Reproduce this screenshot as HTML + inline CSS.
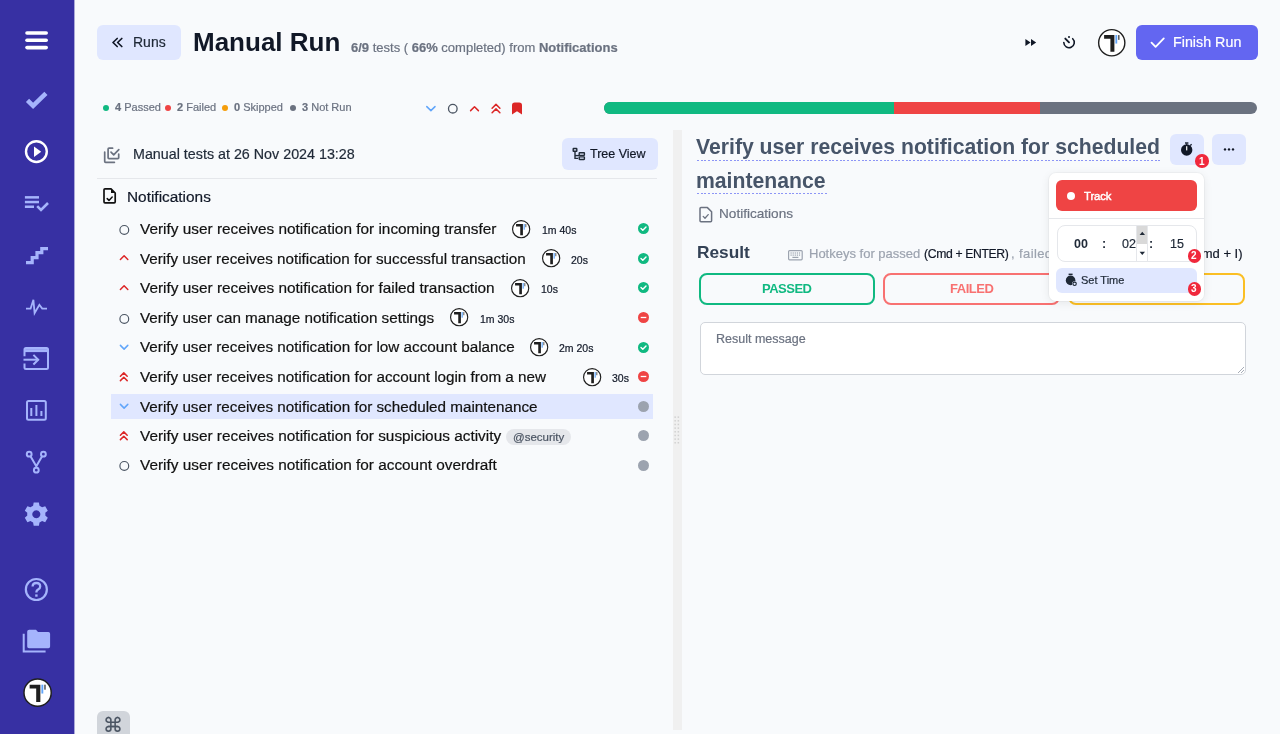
<!DOCTYPE html>
<html><head><meta charset="utf-8">
<style>
*{box-sizing:border-box;margin:0;padding:0}
html,body{width:1280px;height:734px;overflow:hidden;background:#f8fafc;font-family:"Liberation Sans",sans-serif;color:#111827}
.a{position:absolute}
.t{position:absolute;line-height:1;white-space:nowrap;will-change:transform;-webkit-text-stroke:0.2px currentColor}
#sb{left:0;top:0;width:74px;height:734px;background:#3730a3}
#sb svg{position:absolute}
.t[style*="font-weight:700"]{-webkit-text-stroke:0}
.btn{position:absolute;border-radius:6px}
</style></head><body>
<!-- sidebar -->
<div id="sb" class="a">
<svg width="74" height="734" viewBox="0 0 74 734" style="left:0;top:0">
 <g stroke="#fff" stroke-width="3.6" stroke-linecap="round" fill="none">
  <line x1="27" y1="33" x2="46.2" y2="33"/><line x1="27" y1="40.3" x2="46.2" y2="40.3"/><line x1="27" y1="47.6" x2="46.2" y2="47.6"/>
 </g>
 <path d="M27.5 100.3 L33.1 105.9 L45.9 93.3" stroke="#a5b4fc" stroke-width="4.5" fill="none"/>
 <circle cx="36.4" cy="151.6" r="10.4" stroke="#fff" stroke-width="2.4" fill="none"/>
 <path d="M34 146.6 L41.2 151.8 L34 157 Z" fill="#fff"/>
 <g fill="#a5b4fc">
  <rect x="24.9" y="196.1" width="14.1" height="2.5"/><rect x="24.9" y="200.8" width="14.1" height="2.5"/><rect x="24.9" y="205.5" width="9.1" height="2.5"/>
 </g>
 <path d="M37.2 206.2 L41 210 L48 203" stroke="#a5b4fc" stroke-width="2.6" fill="none"/>
 <path d="M26 262.6 H32.2 V257.6 H37 V252.6 H41.8 V248.6 H48" stroke="#a5b4fc" stroke-width="3.2" fill="none"/>
 <path d="M26 308.6 H30.6 L33.4 299.8 L34.6 313 L39.4 304.8 L42.2 308.6 H47" stroke="#a5b4fc" stroke-width="1.8" fill="none" stroke-linejoin="miter"/>
 <g stroke="#a5b4fc" stroke-width="2" fill="none">
  <path d="M24.5 356.2 V349.5 Q24.5 348 26 348 H46.5 Q48 348 48 349.5 V367.5 Q48 369 46.5 369 H26 Q24.5 369 24.5 367.5 V363.4"/>
  <line x1="24.5" y1="350.6" x2="48" y2="350.6" stroke-width="3"/>
  <line x1="23.5" y1="359.7" x2="38.4" y2="359.7"/>
  <path d="M33.4 354.9 L38.2 359.7 L33.4 364.5"/>
  <rect x="27" y="401" width="18.8" height="18.8" rx="1.5"/>
 </g>
 <g fill="#a5b4fc">
  <rect x="30.3" y="408" width="2" height="8"/><rect x="35.4" y="405" width="2" height="11"/><rect x="40.4" y="411" width="2" height="5"/>
 </g>
 <g stroke="#a5b4fc" stroke-width="2" fill="none">
  <circle cx="29.2" cy="454.2" r="2.4"/><circle cx="43.4" cy="454.2" r="2.4"/><circle cx="36.3" cy="470.2" r="2.4"/>
  <path d="M30.5 456.3 L36.3 466.2 L42.1 456.3 M36.3 466 V467.8"/>
 </g>
 <g transform="translate(36.3 514.2)">
  <path fill="#a5b4fc" fill-rule="evenodd" d="M-2.6,-11.6 H2.6 L3.2,-8.4 Q4.6,-7.8 5.8,-6.9 L8.9,-8 L11.5,-3.5 L9,-1.4 Q9.2,0 9,1.4 L11.5,3.5 L8.9,8 L5.8,6.9 Q4.6,7.8 3.2,8.4 L2.6,11.6 H-2.6 L-3.2,8.4 Q-4.6,7.8 -5.8,6.9 L-8.9,8 L-11.5,3.5 L-9,1.4 Q-9.2,0 -9,-1.4 L-11.5,-3.5 L-8.9,-8 L-5.8,-6.9 Q-4.6,-7.8 -3.2,-8.4 Z M0,-4 A4,4 0 1,0 0.01,-4 Z"/>
 </g>
 <circle cx="36.35" cy="589.5" r="10.5" stroke="#a5b4fc" stroke-width="2.2" fill="none"/>
 <path d="M32.6 586.6 Q32.6 583 36.4 583 Q40.2 583 40.2 586.4 Q40.2 588.4 38 589.6 Q36.4 590.4 36.4 592 V592.6" stroke="#a5b4fc" stroke-width="2.3" fill="none"/>
 <rect x="35.2" y="594.4" width="2.4" height="2.3" fill="#a5b4fc"/>
 <path d="M29.2 629.8 H36 L38 632 H48.4 Q50.1 632 50.1 633.8 V646.4 Q50.1 648.2 48.4 648.2 H29 Q27.2 648.2 27.2 646.4 V631.6 Q27.2 629.8 29.2 629.8 Z" fill="#a5b4fc"/>
 <path d="M23.7 633.8 V651.5 H45.6" stroke="#a5b4fc" stroke-width="2" fill="none"/>
 <g transform="translate(23.3 678.4) scale(1.04)"><circle cx="13.75" cy="13.75" r="13.1" fill="#fff" stroke="#1f1f1f" stroke-width="1.4"/><path d="M6.1 6.05 H16.4 V22.75 H12.4 V9.75 H6.1 Z" fill="#1f1f1f"/><rect x="17.4" y="6.05" width="1.8" height="8.5" fill="#60a5fa"/><rect x="20.3" y="6.05" width="1.1" height="4.8" fill="#1f1f1f"/></g>
</svg>
</div>

<div class="a" style="left:74px;top:0;width:1px;height:734px;background:rgba(55,48,163,0.4)"></div>
<!-- header -->
<div class="btn" style="left:97px;top:25px;width:84px;height:35px;background:#e0e7ff"></div>
<div class="t" style="left:133px;top:34.5px;font-size:14px;color:#1f2937">Runs</div>
<div class="t" style="left:192.6px;top:29px;font-size:26px;font-weight:700;color:#111827">Manual Run</div>
<div class="t" style="left:351px;top:41px;font-size:13px;color:#6b7280"><b>6/9</b> tests ( <b>66%</b> completed) from <b>Notifications</b></div>

<div class="btn" style="left:1136px;top:25px;width:121.5px;height:35px;background:#6366f1"></div>
<div class="t" style="left:1173px;top:34.5px;font-size:14.3px;color:#fff">Finish Run</div>

<!-- legend -->
<div class="t" style="left:102px;top:101.7px;font-size:11px;color:#6b7280"></div>

<!-- progress -->
<div class="a" style="left:604px;top:102px;width:653.4px;height:11.5px;border-radius:6px;overflow:hidden;background:#6b7280">
  <div class="a" style="left:0;top:0;width:290.3px;height:100%;background:#10b981"></div>
  <div class="a" style="left:290.3px;top:0;width:145.3px;height:100%;background:#ef4444"></div>
</div>

<!-- left panel header -->
<div class="t" style="left:132.5px;top:146.5px;font-size:14.3px;color:#1f2937">Manual tests at 26 Nov 2024 13:28</div>
<div class="btn" style="left:562px;top:138px;width:96px;height:31.5px;background:#e0e7ff"></div>
<div class="t" style="left:590.3px;top:147.5px;font-size:12.5px;color:#111827">Tree View</div>
<div class="a" style="left:97px;top:178px;width:560px;height:1px;background:#e5e7eb"></div>
<div class="t" style="left:127px;top:189px;font-size:15.4px;color:#111827">Notifications</div>

<svg class="a" style="left:108px;top:34px" width="20" height="17" viewBox="108 34 20 17"><path d="M117.2 38.5 L113 42.5 L117.2 46.5 M121.8 38.5 L117.6 42.5 L121.8 46.5" stroke="#111827" stroke-width="1.7" fill="none" stroke-linecap="round" stroke-linejoin="round"/></svg>
<svg class="a" style="left:1020px;top:30px" width="60" height="25" viewBox="1020 30 60 25">
 <path d="M1025.4 38.9 L1030.6 42.4 L1025.4 45.9 Z M1031 38.9 L1036.2 42.4 L1031 45.9 Z" fill="#111827"/>
 <path d="M1063.8 42.6 A5.25 5.25 0 1 0 1072.7 38.7" stroke="#111827" stroke-width="1.6" fill="none" stroke-linecap="round"/>
 <line x1="1065.3" y1="38.6" x2="1069" y2="42.3" stroke="#111827" stroke-width="1.9" stroke-linecap="round"/>
 <circle cx="1069" cy="36.9" r="1" fill="#111827"/>
</svg>
<svg class="a" style="left:1097.65px;top:28.85px;overflow:visible" width="27.50" height="27.50" viewBox="0 0 27.5 27.5"><circle cx="13.75" cy="13.75" r="13.1" fill="#fff" stroke="#1f1f1f" stroke-width="1.4"/><path d="M6.1 6.05 H16.4 V22.75 H12.4 V9.75 H6.1 Z" fill="#1f1f1f"/><rect x="17.4" y="6.05" width="1.8" height="8.5" fill="#60a5fa"/><rect x="20.3" y="6.05" width="1.1" height="4.8" fill="#1f1f1f"/></svg>
<svg class="a" style="left:1148px;top:35px" width="20" height="15" viewBox="1148 35 20 15"><path d="M1151.5 42.6 L1155.6 46.9 L1163.8 38.4" stroke="#fff" stroke-width="1.8" fill="none" stroke-linecap="round" stroke-linejoin="round"/></svg>
<div class="a" style="left:102.6px;top:104.7px;width:6px;height:6px;border-radius:50%;background:#10b981"></div>
<div class="t" style="left:115px;top:101.69px;font-size:11px;color:#6b7280"><b>4</b> Passed</div>
<div class="a" style="left:165.0px;top:104.7px;width:6px;height:6px;border-radius:50%;background:#ef4444"></div>
<div class="t" style="left:177px;top:101.69px;font-size:11px;color:#6b7280"><b>2</b> Failed</div>
<div class="a" style="left:221.5px;top:104.7px;width:6px;height:6px;border-radius:50%;background:#f59e0b"></div>
<div class="t" style="left:234px;top:101.69px;font-size:11px;color:#6b7280"><b>0</b> Skipped</div>
<div class="a" style="left:290.0px;top:104.7px;width:6px;height:6px;border-radius:50%;background:#6b7280"></div>
<div class="t" style="left:302px;top:101.69px;font-size:11px;color:#6b7280"><b>3</b> Not Run</div>
<svg class="a" style="left:420px;top:98px" width="110" height="20" viewBox="420 98 110 20">
 <path d="M426.8 106.6 L430.9 110.6 L435 106.6" stroke="#60a5fa" stroke-width="1.5" fill="none" stroke-linecap="round" stroke-linejoin="round"/>
 <circle cx="452.8" cy="108.7" r="4.3" stroke="#4b5563" stroke-width="1.3" fill="none"/>
 <path d="M470.6 110.6 L474.5 106.7 L478.4 110.6" stroke="#dc2626" stroke-width="1.5" fill="none" stroke-linecap="round" stroke-linejoin="round"/>
 <path d="M492.1 108.3 L496 104.4 L499.9 108.3 M492.1 112.8 L496 108.9 L499.9 112.8" stroke="#dc2626" stroke-width="1.5" fill="none" stroke-linecap="round" stroke-linejoin="round"/>
 <path d="M512 105.4 Q512 102.6 514.8 102.6 H519.2 Q522 102.6 522 105.4 V114.4 L517 111.2 L512 114.4 Z" fill="#dc2626"/>
</svg>
<svg class="a" style="left:100px;top:144px" width="24" height="22" viewBox="100 144 24 22">
 <path d="M104.7 152 V161.4 Q104.7 162.3 105.6 162.3 H114.4" stroke="#6b7280" stroke-width="1.7" fill="none" stroke-linecap="round"/>
 <path d="M112.6 148.2 H109 Q108.1 148.2 108.1 149.1 V157.8 Q108.1 158.7 109 158.7 H117.8 Q118.7 158.7 118.7 157.8 V154" stroke="#6b7280" stroke-width="1.7" fill="none" stroke-linecap="round"/>
 <path d="M111 152.2 L113.7 154.9 L118.8 149.6" stroke="#6b7280" stroke-width="1.7" fill="none" stroke-linecap="round" stroke-linejoin="round"/>
</svg>
<svg class="a" style="left:570px;top:145px" width="20" height="18" viewBox="570 145 20 18">
 <g stroke="#1f2937" stroke-width="1.4" fill="none">
 <rect x="573.2" y="148.5" width="3.6" height="2.8" rx="0.4"/>
 <path d="M575 151.5 V158.4 H578"/>
 <rect x="579.2" y="152.8" width="5.2" height="2.6" rx="0.4"/>
 <rect x="579.2" y="156.9" width="5.2" height="2.6" rx="0.4"/>
 <path d="M575 155.6 H579"/>
 </g>
</svg>
<svg class="a" style="left:100px;top:185px" width="20" height="22" viewBox="100 185 20 22">
 <path d="M105 188.8 H111 L115.2 193 V201.8 Q115.2 202.8 114.2 202.8 H105 Q104 202.8 104 201.8 V189.8 Q104 188.8 105 188.8 Z" stroke="#111" stroke-width="1.7" fill="none" stroke-linejoin="round"/>
 <path d="M111 188.8 V193 H115.2 Z" fill="#111"/>
 <path d="M107.2 198.6 L109 200.4 L112.2 197" stroke="#111" stroke-width="1.5" fill="none" stroke-linecap="round" stroke-linejoin="round"/>
</svg>
<div class="a" style="left:111.3px;top:394px;width:541.7px;height:25.4px;background:#e0e7ff"></div>
<svg class="a" style="left:118px;top:221.80px" width="14" height="14" viewBox="0 0 14 14"><circle cx="6.3" cy="7.9" r="4.4" stroke="#4b5563" stroke-width="1.15" fill="none"/></svg>
<div class="t" style="left:140.2px;top:221.23px;font-size:15.38px;color:#111">Verify user receives notification for incoming transfer</div>
<svg class="a" style="left:512.25px;top:219.65px;overflow:visible" width="18.30" height="18.30" viewBox="0 0 27.5 27.5"><circle cx="13.75" cy="13.75" r="12.9" fill="#fff" stroke="#1f1f1f" stroke-width="1.75"/><path d="M6.1 6.05 H16.4 V22.75 H12.4 V9.75 H6.1 Z" fill="#1f1f1f"/><rect x="17.4" y="6.05" width="1.8" height="8.5" fill="#60a5fa"/><rect x="20.3" y="6.05" width="1.1" height="4.8" fill="#1f1f1f"/></svg>
<div class="t" style="left:542px;top:225.06px;font-size:10.5px;color:#111827">1m 40s</div>
<svg class="a" style="left:637.7px;top:223.30px" width="11" height="11" viewBox="0 0 11 11"><circle cx="5.5" cy="5.5" r="5.5" fill="#10b981"/><path d="M3 5.6 L4.8 7.3 L8 4" stroke="#fff" stroke-width="1.4" fill="none" stroke-linecap="round" stroke-linejoin="round"/></svg>
<svg class="a" style="left:118px;top:251.37px" width="14" height="14" viewBox="0 0 14 14"><path d="M2.4 8.5 L6.1 4.8 L9.8 8.5" stroke="#dc2626" stroke-width="1.5" fill="none" stroke-linecap="round" stroke-linejoin="round"/></svg>
<div class="t" style="left:140.2px;top:250.90px;font-size:15.22px;color:#111">Verify user receives notification for successful transaction</div>
<svg class="a" style="left:541.95px;top:249.22px;overflow:visible" width="18.30" height="18.30" viewBox="0 0 27.5 27.5"><circle cx="13.75" cy="13.75" r="12.9" fill="#fff" stroke="#1f1f1f" stroke-width="1.75"/><path d="M6.1 6.05 H16.4 V22.75 H12.4 V9.75 H6.1 Z" fill="#1f1f1f"/><rect x="17.4" y="6.05" width="1.8" height="8.5" fill="#60a5fa"/><rect x="20.3" y="6.05" width="1.1" height="4.8" fill="#1f1f1f"/></svg>
<div class="t" style="left:571.3px;top:254.59px;font-size:10.5px;color:#111827">20s</div>
<svg class="a" style="left:637.7px;top:252.87px" width="11" height="11" viewBox="0 0 11 11"><circle cx="5.5" cy="5.5" r="5.5" fill="#10b981"/><path d="M3 5.6 L4.8 7.3 L8 4" stroke="#fff" stroke-width="1.4" fill="none" stroke-linecap="round" stroke-linejoin="round"/></svg>
<svg class="a" style="left:118px;top:280.94px" width="14" height="14" viewBox="0 0 14 14"><path d="M2.4 8.5 L6.1 4.8 L9.8 8.5" stroke="#dc2626" stroke-width="1.5" fill="none" stroke-linecap="round" stroke-linejoin="round"/></svg>
<div class="t" style="left:140.2px;top:280.29px;font-size:15.38px;color:#111">Verify user receives notification for failed transaction</div>
<svg class="a" style="left:511.25px;top:278.79px;overflow:visible" width="18.30" height="18.30" viewBox="0 0 27.5 27.5"><circle cx="13.75" cy="13.75" r="12.9" fill="#fff" stroke="#1f1f1f" stroke-width="1.75"/><path d="M6.1 6.05 H16.4 V22.75 H12.4 V9.75 H6.1 Z" fill="#1f1f1f"/><rect x="17.4" y="6.05" width="1.8" height="8.5" fill="#60a5fa"/><rect x="20.3" y="6.05" width="1.1" height="4.8" fill="#1f1f1f"/></svg>
<div class="t" style="left:541.1px;top:284.12px;font-size:10.5px;color:#111827">10s</div>
<svg class="a" style="left:637.7px;top:282.44px" width="11" height="11" viewBox="0 0 11 11"><circle cx="5.5" cy="5.5" r="5.5" fill="#10b981"/><path d="M3 5.6 L4.8 7.3 L8 4" stroke="#fff" stroke-width="1.4" fill="none" stroke-linecap="round" stroke-linejoin="round"/></svg>
<svg class="a" style="left:118px;top:310.51px" width="14" height="14" viewBox="0 0 14 14"><circle cx="6.3" cy="7.9" r="4.4" stroke="#4b5563" stroke-width="1.15" fill="none"/></svg>
<div class="t" style="left:140.2px;top:309.93px;font-size:15.25px;color:#111">Verify user can manage notification settings</div>
<svg class="a" style="left:449.70px;top:308.36px;overflow:visible" width="18.30" height="18.30" viewBox="0 0 27.5 27.5"><circle cx="13.75" cy="13.75" r="12.9" fill="#fff" stroke="#1f1f1f" stroke-width="1.75"/><path d="M6.1 6.05 H16.4 V22.75 H12.4 V9.75 H6.1 Z" fill="#1f1f1f"/><rect x="17.4" y="6.05" width="1.8" height="8.5" fill="#60a5fa"/><rect x="20.3" y="6.05" width="1.1" height="4.8" fill="#1f1f1f"/></svg>
<div class="t" style="left:479.6px;top:313.65px;font-size:10.5px;color:#111827">1m 30s</div>
<svg class="a" style="left:637.7px;top:312.01px" width="11" height="11" viewBox="0 0 11 11"><circle cx="5.5" cy="5.5" r="5.5" fill="#ef4444"/><rect x="2.7" y="4.85" width="5.6" height="1.3" fill="#fff"/></svg>
<svg class="a" style="left:118px;top:340.08px" width="14" height="14" viewBox="0 0 14 14"><path d="M2.4 5.4 L6.1 9.1 L9.8 5.4" stroke="#60a5fa" stroke-width="1.5" fill="none" stroke-linecap="round" stroke-linejoin="round"/></svg>
<div class="t" style="left:140.2px;top:339.46px;font-size:15.25px;color:#111">Verify user receives notification for low account balance</div>
<svg class="a" style="left:530.00px;top:337.93px;overflow:visible" width="18.30" height="18.30" viewBox="0 0 27.5 27.5"><circle cx="13.75" cy="13.75" r="12.9" fill="#fff" stroke="#1f1f1f" stroke-width="1.75"/><path d="M6.1 6.05 H16.4 V22.75 H12.4 V9.75 H6.1 Z" fill="#1f1f1f"/><rect x="17.4" y="6.05" width="1.8" height="8.5" fill="#60a5fa"/><rect x="20.3" y="6.05" width="1.1" height="4.8" fill="#1f1f1f"/></svg>
<div class="t" style="left:559.3px;top:343.18px;font-size:10.5px;color:#111827">2m 20s</div>
<svg class="a" style="left:637.7px;top:341.58px" width="11" height="11" viewBox="0 0 11 11"><circle cx="5.5" cy="5.5" r="5.5" fill="#10b981"/><path d="M3 5.6 L4.8 7.3 L8 4" stroke="#fff" stroke-width="1.4" fill="none" stroke-linecap="round" stroke-linejoin="round"/></svg>
<svg class="a" style="left:118px;top:369.65px" width="14" height="14" viewBox="0 0 14 14"><path d="M2.4 6.3 L5.8 2.9 L9.2 6.3 M2.4 10.6 L5.8 7.2 L9.2 10.6" stroke="#dc2626" stroke-width="1.5" fill="none" stroke-linecap="round" stroke-linejoin="round"/></svg>
<div class="t" style="left:140.2px;top:368.99px;font-size:15.25px;color:#111">Verify user receives notification for account login from a new</div>
<svg class="a" style="left:582.75px;top:367.50px;overflow:visible" width="18.30" height="18.30" viewBox="0 0 27.5 27.5"><circle cx="13.75" cy="13.75" r="12.9" fill="#fff" stroke="#1f1f1f" stroke-width="1.75"/><path d="M6.1 6.05 H16.4 V22.75 H12.4 V9.75 H6.1 Z" fill="#1f1f1f"/><rect x="17.4" y="6.05" width="1.8" height="8.5" fill="#60a5fa"/><rect x="20.3" y="6.05" width="1.1" height="4.8" fill="#1f1f1f"/></svg>
<div class="t" style="left:612px;top:372.71px;font-size:10.5px;color:#111827">30s</div>
<svg class="a" style="left:637.7px;top:371.15px" width="11" height="11" viewBox="0 0 11 11"><circle cx="5.5" cy="5.5" r="5.5" fill="#ef4444"/><rect x="2.7" y="4.85" width="5.6" height="1.3" fill="#fff"/></svg>
<svg class="a" style="left:118px;top:399.22px" width="14" height="14" viewBox="0 0 14 14"><path d="M2.4 5.4 L6.1 9.1 L9.8 5.4" stroke="#60a5fa" stroke-width="1.5" fill="none" stroke-linecap="round" stroke-linejoin="round"/></svg>
<div class="t" style="left:140.2px;top:398.52px;font-size:15.25px;color:#111">Verify user receives notification for scheduled maintenance</div>
<div class="a" style="left:637.7px;top:400.72px;width:11px;height:11px;border-radius:50%;background:#9ca3af"></div>
<svg class="a" style="left:118px;top:428.79px" width="14" height="14" viewBox="0 0 14 14"><path d="M2.4 6.3 L5.8 2.9 L9.2 6.3 M2.4 10.6 L5.8 7.2 L9.2 10.6" stroke="#dc2626" stroke-width="1.5" fill="none" stroke-linecap="round" stroke-linejoin="round"/></svg>
<div class="t" style="left:140.2px;top:427.96px;font-size:15.36px;color:#111">Verify user receives notification for suspicious activity</div>
<div class="a" style="left:637.7px;top:430.29px;width:11px;height:11px;border-radius:50%;background:#9ca3af"></div>
<svg class="a" style="left:118px;top:458.36px" width="14" height="14" viewBox="0 0 14 14"><circle cx="6.3" cy="7.9" r="4.4" stroke="#4b5563" stroke-width="1.15" fill="none"/></svg>
<div class="t" style="left:140.2px;top:457.49px;font-size:15.36px;color:#111">Verify user receives notification for account overdraft</div>
<div class="a" style="left:637.7px;top:459.86px;width:11px;height:11px;border-radius:50%;background:#9ca3af"></div>
<div class="a" style="left:505.7px;top:428.7px;width:65px;height:16.8px;border-radius:8px;background:#e5e7eb"></div>
<div class="t" style="left:513px;top:432.4px;font-size:11.5px;color:#4b5563">@security</div>

<!-- divider -->
<div class="a" style="left:673px;top:130px;width:9px;height:600px;background:#f0f0f0"></div>

<svg class="a" style="left:673px;top:414px" width="9" height="32" viewBox="0 0 9 32"><g fill="#d1d1d1"><rect x="1.4" y="2.40" width="1.5" height="1.5"/><rect x="4.6" y="2.40" width="1.5" height="1.5"/><rect x="1.4" y="6.06" width="1.5" height="1.5"/><rect x="4.6" y="6.06" width="1.5" height="1.5"/><rect x="1.4" y="9.72" width="1.5" height="1.5"/><rect x="4.6" y="9.72" width="1.5" height="1.5"/><rect x="1.4" y="13.38" width="1.5" height="1.5"/><rect x="4.6" y="13.38" width="1.5" height="1.5"/><rect x="1.4" y="17.04" width="1.5" height="1.5"/><rect x="4.6" y="17.04" width="1.5" height="1.5"/><rect x="1.4" y="20.70" width="1.5" height="1.5"/><rect x="4.6" y="20.70" width="1.5" height="1.5"/><rect x="1.4" y="24.36" width="1.5" height="1.5"/><rect x="4.6" y="24.36" width="1.5" height="1.5"/><rect x="1.4" y="28.02" width="1.5" height="1.5"/><rect x="4.6" y="28.02" width="1.5" height="1.5"/></g></svg>
<!-- right panel -->
<div class="t" style="left:696px;top:136.45px;font-size:21.2px;font-weight:700;color:#475569">Verify user receives notification for scheduled</div>
<div class="t" style="left:696px;top:169.55px;font-size:21.2px;font-weight:700;color:#475569">maintenance</div>
<div class="a" style="left:696.5px;top:160px;width:463px;height:1px;background:repeating-linear-gradient(90deg,#8c95f6 0 2px,transparent 2px 3.66px)"></div>
<div class="a" style="left:696.5px;top:193px;width:131px;height:1px;background:repeating-linear-gradient(90deg,#8c95f6 0 2px,transparent 2px 3.66px)"></div>
<svg class="a" style="left:697px;top:204px" width="18" height="20" viewBox="697 204 18 20">
 <path d="M701 207.6 H707.4 L711.6 211.8 V220.8 Q711.6 221.8 710.6 221.8 H701 Q700 221.8 700 220.8 V208.6 Q700 207.6 701 207.6 Z" stroke="#6b7280" stroke-width="1.5" fill="none" stroke-linejoin="round"/>
 <path d="M703.2 216.4 L705 218.2 L708.2 214.6" stroke="#6b7280" stroke-width="1.3" fill="none" stroke-linecap="round" stroke-linejoin="round"/>
</svg>
<div class="t" style="left:718.5px;top:206.79px;font-size:13.6px;color:#6b7280">Notifications</div>
<div class="t" style="left:697px;top:244.11px;font-size:17.3px;font-weight:700;color:#334155">Result</div>
<svg class="a" style="left:786px;top:247px" width="19" height="16" viewBox="786 247 19 16">
 <rect x="788.6" y="250.6" width="13.6" height="9.2" rx="1" stroke="#9ca3af" stroke-width="1.2" fill="none"/>
 <g fill="#9ca3af"><rect x="790.5" y="252.4" width="1.2" height="1.2"/><rect x="792.6" y="252.4" width="1.2" height="1.2"/><rect x="794.7" y="252.4" width="1.2" height="1.2"/><rect x="796.8" y="252.4" width="1.2" height="1.2"/><rect x="798.9" y="252.4" width="1.2" height="1.2"/>
 <rect x="790.5" y="254.5" width="1.2" height="1.2"/><rect x="792.6" y="254.5" width="1.2" height="1.2"/><rect x="794.7" y="254.5" width="1.2" height="1.2"/><rect x="796.8" y="254.5" width="1.2" height="1.2"/><rect x="798.9" y="254.5" width="1.2" height="1.2"/>
 <rect x="792.4" y="256.8" width="6" height="1.2"/></g>
</svg>
<div class="t" style="left:809px;top:247.40px;font-size:13px;color:#9ca3af">Hotkeys for passed</div>
<div class="t" style="left:923.5px;top:248.07px;font-size:12.2px;color:#111827;letter-spacing:-0.35px">(Cmd + ENTER)</div>
<div class="t" style="left:1011px;top:247.40px;font-size:13px;color:#9ca3af;letter-spacing:0.4px">, failed</div>
<div class="t" style="right:37px;top:247.4px;font-size:13px;color:#111827">(Cmd + I)</div>
<div class="a" style="left:698.6px;top:272.5px;width:176.6px;height:32px;border:2px solid #10b981;border-radius:8px"></div>
<div class="t" style="left:762px;top:281.9px;font-size:13px;font-weight:700;color:#10b981;letter-spacing:-0.5px">PASSED</div>
<div class="a" style="left:883.3px;top:272.5px;width:176.6px;height:32px;border:2px solid #f87171;border-radius:8px"></div>
<div class="t" style="left:949.5px;top:281.9px;font-size:13px;font-weight:700;color:#f87171;letter-spacing:-0.45px">FAILED</div>
<div class="a" style="left:1068px;top:272.5px;width:176.6px;height:32px;border:2px solid #fbbf24;border-radius:8px"></div>
<div class="a" style="left:700.3px;top:322px;width:545.5px;height:52.8px;border:1px solid #d1d5db;border-radius:5px;background:#fff"></div>
<div class="t" style="left:716.2px;top:333.42px;font-size:12.5px;color:#6b7280">Result message</div>
<svg class="a" style="left:1236px;top:365px" width="9" height="9" viewBox="0 0 9 9"><path d="M2 8 L8 2 M5 8 L8 5" stroke="#9ca3af" stroke-width="0.9"/></svg>
<div class="btn" style="left:1169.5px;top:134px;width:34.5px;height:31px;background:#e0e7ff"></div>
<div class="btn" style="left:1212px;top:134px;width:34px;height:31px;background:#e0e7ff"></div>
<svg class="a" style="left:1176px;top:138px" width="22" height="22" viewBox="1176 138 22 22">
 <circle cx="1186.7" cy="150" r="5.7" fill="#111827"/>
 <rect x="1185" y="142.3" width="3.4" height="1.4" fill="#111827"/>
 <rect x="1186.1" y="143.5" width="1.2" height="1.4" fill="#111827"/>
 <path d="M1190.2 145.6 L1191.6 144.2" stroke="#111827" stroke-width="1.3"/>
 <rect x="1186.1" y="146.2" width="1.2" height="4.2" fill="#fff"/>
</svg>
<svg class="a" style="left:1220px;top:145px" width="18" height="9" viewBox="1220 145 18 9">
 <circle cx="1225" cy="149.4" r="1.2" fill="#111827"/><circle cx="1229" cy="149.4" r="1.2" fill="#111827"/><circle cx="1233" cy="149.4" r="1.2" fill="#111827"/>
</svg>
<div class="a" style="left:1049px;top:173px;width:155px;height:128px;background:#fff;border-radius:7px;box-shadow:0 2px 10px rgba(0,0,0,0.08),0 0 0 1px rgba(0,0,0,0.03)"></div>
<div class="btn" style="left:1056.2px;top:180.2px;width:141px;height:30.8px;background:#ef4444"></div>
<div class="a" style="left:1066.6px;top:192px;width:8px;height:8px;border-radius:50%;background:#fff"></div>
<div class="t" style="left:1083.8px;top:190.69px;font-size:11.3px;color:#fff;-webkit-text-stroke:0.45px #fff;letter-spacing:-0.1px">Track</div>
<div class="a" style="left:1049px;top:218px;width:155px;height:1px;background:#e5e7eb"></div>
<div class="a" style="left:1056.8px;top:225.3px;width:140.7px;height:36.5px;border:1px solid #e5e7eb;border-radius:8px"></div>
<div class="t" style="left:1074px;top:238.02px;font-size:12.5px;font-weight:700;color:#1f2937">00</div>
<div class="t" style="left:1101.5px;top:238.02px;font-size:12.5px;font-weight:700;color:#1f2937">:</div>
<div class="t" style="left:1121.5px;top:238.02px;font-size:12.5px;color:#1f2937">02</div>
<div class="t" style="left:1149px;top:238.02px;font-size:12.5px;font-weight:700;color:#1f2937">:</div>
<div class="t" style="left:1169.8px;top:238.02px;font-size:12.5px;color:#1f2937">15</div>
<div class="a" style="left:1136.4px;top:226px;width:12px;height:35.5px;border-left:1px solid #e5e7eb;border-right:1px solid #e5e7eb"></div>
<div class="a" style="left:1137.4px;top:226px;width:10px;height:18px;background:#d9d9d9"></div>
<svg class="a" style="left:1137px;top:228px" width="11" height="30" viewBox="1137 228 11 30">
 <path d="M1139.6 235 L1142.3 231.8 L1145 235 Z" fill="#1f2937"/>
 <path d="M1139.6 251.8 L1142.3 255 L1145 251.8 Z" fill="#1f2937"/>
</svg>
<div class="btn" style="left:1056.2px;top:267.8px;width:141px;height:25.4px;background:#e0e7ff"></div>
<svg class="a" style="left:1063px;top:271px" width="16" height="17" viewBox="1063 271 16 17">
 <circle cx="1070.6" cy="280.4" r="4.8" fill="#1f2937"/>
 <rect x="1068.6" y="273.6" width="4" height="1.4" fill="#1f2937"/>
 <circle cx="1074.6" cy="283.8" r="2.6" fill="#e0e7ff"/>
 <circle cx="1074.6" cy="283.8" r="1.7" fill="none" stroke="#1f2937" stroke-width="1.1"/>
</svg>
<div class="t" style="left:1080.8px;top:274.89px;font-size:11px;color:#1f2937">Set Time</div>
<div class="a" style="left:1195.4px;top:154.2px;width:13.6px;height:13.6px;border-radius:50%;background:#f0283c"></div>
<div class="t" style="left:1199.0px;top:156.53px;font-size:10px;color:#fff;font-weight:700">1</div>
<div class="a" style="left:1187.7px;top:249.1px;width:13.6px;height:13.6px;border-radius:50%;background:#f0283c"></div>
<div class="t" style="left:1191.3px;top:251.43px;font-size:10px;color:#fff;font-weight:700">2</div>
<div class="a" style="left:1187.7px;top:282.1px;width:13.6px;height:13.6px;border-radius:50%;background:#f0283c"></div>
<div class="t" style="left:1191.3px;top:284.44px;font-size:10px;color:#fff;font-weight:700">3</div>
<div class="a" style="left:97.2px;top:711.4px;width:32.4px;height:30px;border-radius:6px;background:#d1d5db"></div>
<div class="t" style="left:103.4px;top:716.2px;font-size:19.8px;color:#4b5563">&#8984;</div>
</body></html>
